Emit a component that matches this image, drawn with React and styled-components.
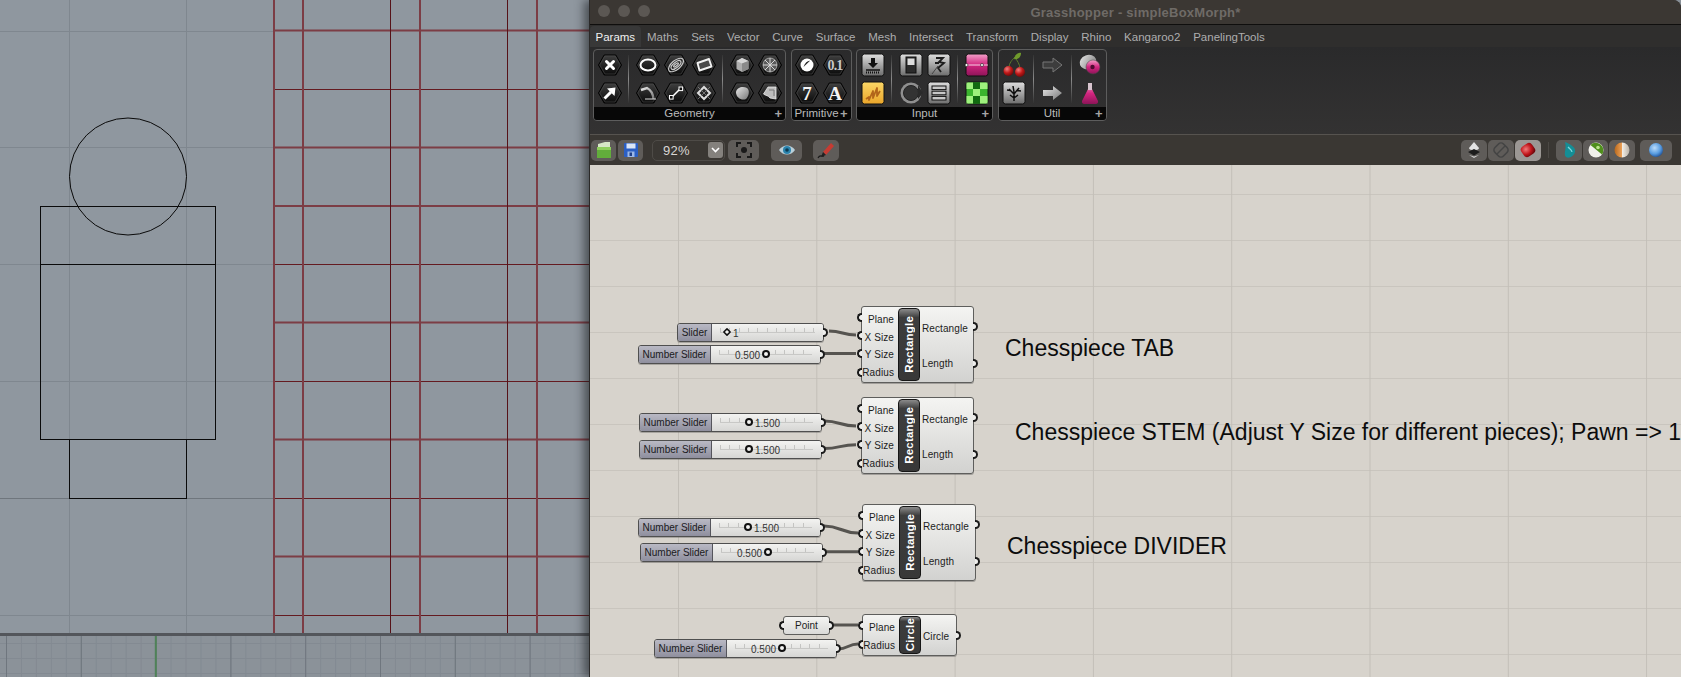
import React from "react";
import styled, { createGlobalStyle } from "styled-components";

const GlobalStyle = createGlobalStyle`
  html, body, #root {
    margin: 0;
    width: 100%;
    height: 100%;
    overflow: hidden;
    background: #8f979f;
  }
  * { box-sizing: border-box; }
`;

const FONT = `"Liberation Sans", Arial, sans-serif`;

/* ---------- rhino side ---------- */

const RED_V = [[274, 1], [303, 1], [390.5, 0], [420, 1], [507.5, 0], [537, 1]];
const RED_H = [
  [30.5, 1], [89.5, 0], [147.5, 1], [206, 1], [264.5, 0], [322.5, 1],
  [381.5, 0], [439.5, 1], [498.5, 0], [556.5, 1], [615.5, 0],
];
const FAINT_H = [31.5, 147.5, 264.5, 381.5, 498.5, 615.5];

const RhinoDrawing = () => (
  <svg width="589" height="634" viewBox="0 0 589 634">
    {[69.5, 186.5].map((x) => (
      <line key={x} x1={x} x2={x} y1="0" y2="634" stroke="#7f878f" strokeWidth="1" />
    ))}
    {FAINT_H.map((y) => (
      <line key={y} x1="0" x2="274" y1={y} y2={y} stroke={y === 498.5 ? "#6f767d" : "#7f878f"} strokeWidth="1" />
    ))}
    {RED_H.map(([y, thick]) => (
      <line key={y} x1="274" x2="589" y1={y} y2={y}
        stroke={thick ? "#7c3d45" : "#641a20"} strokeWidth={thick ? 2 : 1} />
    ))}
    {RED_V.map(([x, thick]) => (
      <line key={x} x1={x} x2={x} y1="0" y2="634"
        stroke={thick ? "#7c3d45" : "#561218"} strokeWidth={thick ? 2 : 1} />
    ))}
    <g fill="none" stroke="#0a0a0a" strokeWidth="1">
      <circle cx="128" cy="176.5" r="58.5" />
      <rect x="40.5" y="206.5" width="175" height="58" />
      <rect x="40.5" y="264.5" width="175" height="175" />
      <rect x="69.5" y="439.5" width="117" height="59" />
    </g>
  </svg>
);

const StripGrid = () => {
  const minor = Array.from({ length: 40 }, (_, i) => 6.5 + i * 14.96);
  const major = Array.from({ length: 8 }, (_, i) => 6.5 + i * 74.8);
  return (
    <svg width="589" height="41" viewBox="0 0 589 41">
      {minor.map((x) => (
        <line key={x} x1={x} x2={x} y1="0" y2="41" stroke="#838a92" strokeWidth="1" />
      ))}
      {[7.5, 22.5, 37.5].map((y) => (
        <line key={y} x1="0" x2="589" y1={y} y2={y} stroke="#838a92" strokeWidth="1" />
      ))}
      {major.map((x) => (
        <line key={x} x1={x} x2={x} y1="0" y2="41" stroke="#6f767e" strokeWidth="1" />
      ))}
      <line x1="155.8" x2="155.8" y1="0" y2="41" stroke="#4f8258" strokeWidth="2" />
    </svg>
  );
};

const Page = styled.div`
  display: flex;
  width: 1681px;
  height: 677px;
  font-family: ${FONT};
`;

const RhinoPane = styled.div`
  display: flex;
  flex-direction: column;
  width: 589px;
  flex: none;
  background: #8f979f;
`;

const Viewport = styled.div`
  height: 633px;
  line-height: 0;
  overflow: hidden;
`;

const ViewDivider = styled.div`
  height: 3px;
  background: #53565b;
`;

const Strip = styled.div`
  flex: 1;
  line-height: 0;
  overflow: hidden;
  background: #8b9299;
`;

/* ---------- grasshopper window ---------- */

const GhWindow = styled.div`
  position: relative;
  z-index: 1;
  flex: 1;
  display: flex;
  flex-direction: column;
  border-left: 1px solid #2a2928;
  border-top-right-radius: 8px;
  box-shadow: -5px 0 10px rgba(20, 22, 26, 0.55);
  overflow: hidden;
  background: #3a3632;
`;

const TitleBar = styled.div`
  position: relative;
  display: flex;
  align-items: center;
  justify-content: center;
  height: 25px;
  flex: none;
  background: #3b3733;
  border-bottom: 1px solid #0f0e0d;
  color: #6f6b67;
  font-size: 13px;
  font-weight: 700;
  letter-spacing: 0.25px;
`;

const Lights = styled.div`
  position: absolute;
  left: 7.5px;
  top: 5px;
  display: flex;
  gap: 8px;
`;

const Light = styled.span`
  width: 12px;
  height: 12px;
  border-radius: 50%;
  background: #5b5753;
`;

const TabBar = styled.div`
  display: flex;
  align-items: flex-end;
  height: 22px;
  flex: none;
  background: #2f2e2d;
`;

const Tab = styled.div`
  display: flex;
  align-items: center;
  height: 21px;
  padding: ${(p) => (p.$active ? "0 5.5px" : "0 6.4px")};
  font-size: 11.5px;
  color: ${(p) => (p.$active ? "#f0f0f0" : "#adadad")};
  background: ${(p) => (p.$active ? "#383838" : "transparent")};
  border-radius: 4px 4px 0 0;
`;

const Ribbon = styled.div`
  display: flex;
  align-items: flex-start;
  gap: 4.5px;
  height: 88px;
  flex: none;
  padding: 2px 0 0 3px;
  background: linear-gradient(#2a2a2b, #333232);
  border-bottom: 1px solid #56534f;
`;

const Group = styled.div`
  display: flex;
  flex-direction: column;
  height: 72px;
  border: 1px solid #5d5d5d;
  border-radius: 4px;
  overflow: hidden;
`;

const GroupBody = styled.div`
  flex: 1;
  display: flex;
  align-items: center;
  gap: 5px;
  padding: 0 1.5px;
`;

const IconCols = styled.div`
  display: grid;
  grid-auto-flow: column;
  grid-template-rows: repeat(2, 28px);
  grid-auto-columns: 28px;
  line-height: 0;
`;

const Sep = styled.div`
  width: 1px;
  height: 48px;
  margin: 0 -0.5px;
  background: linear-gradient(#333, #8a8a8a 50%, #333);
`;

const GroupFoot = styled.div`
  position: relative;
  flex: none;
  height: 13px;
  line-height: 13px;
  text-align: center;
  background: #070707;
  color: #b9b9b9;
  font-size: 11.5px;
  padding-right: ${(p) => (p.$narrow ? "9px" : "0")};
`;

const Plus = styled.span`
  position: absolute;
  right: 3px;
  top: 0;
  font-size: 13px;
  font-weight: 700;
  color: #a5a5a5;
`;

const Toolbar = styled.div`
  display: flex;
  align-items: center;
  height: 30px;
  flex: none;
  padding: 0 9px 0 1px;
  background: #3a3733;
`;

const ToolGroup = styled.div`
  display: flex;
  align-items: center;
  gap: ${(p) => p.$gap || 1}px;
  margin-left: ${(p) => p.$ml || 0}px;
`;

const ToolBtn = styled.div`
  display: flex;
  align-items: center;
  justify-content: center;
  width: ${(p) => p.$w || 25}px;
  height: 21px;
  border-radius: 5px;
  background: ${(p) => (p.$on ? "#9b9794" : "#5f5c59")};
  line-height: 0;
`;

const ZoomField = styled.div`
  display: flex;
  align-items: center;
  justify-content: space-between;
  width: 73px;
  height: 21px;
  margin-left: 9px;
  padding: 0 1.5px 0 10px;
  border: 1px solid #4e4b47;
  border-radius: 5px;
  color: #d8d6d3;
  font-size: 13px;
  letter-spacing: 0.3px;
`;

const ZoomChevron = styled.span`
  display: flex;
  align-items: center;
  justify-content: center;
  width: 15px;
  height: 16px;
  border-radius: 3px;
  background: #84817d;
  line-height: 0;
`;

const ToolDivider = styled.div`
  width: 1px;
  height: 16px;
  margin: 0 7px;
  background: #4b4844;
`;

const Spacer = styled.div`
  flex: 1;
`;

/* ---------- canvas ---------- */

const Canvas = styled.div`
  position: relative;
  flex: 1;
  overflow: hidden;
  background-color: #d7d3cc;
  background-image:
    linear-gradient(to right, #c3bfb8 1px, transparent 1px),
    linear-gradient(to bottom, #c9c5be 1px, transparent 1px);
  background-size: 138.3px 100%, 100% 46px;
  background-position: 88px 0, 0 29px;
`;

const WireLayer = styled.svg`
  position: absolute;
  left: 0;
  top: 0;
  width: 100%;
  height: 100%;
`;

const Note = styled.div`
  position: absolute;
  left: ${(p) => p.$x - 590}px;
  top: ${(p) => p.$y - 165}px;
  font-size: 23px;
  line-height: 26px;
  color: #0c0c0c;
  white-space: nowrap;
`;

const Comp = styled.div`
  position: absolute;
  left: ${(p) => p.$x - 590}px;
  top: ${(p) => p.$y - 165}px;
  width: ${(p) => p.$w}px;
  height: ${(p) => p.$h}px;
  display: flex;
  padding: 1px 0 1px 0;
  background: linear-gradient(#f4f4f2, #d2d2d0);
  border: 1px solid #5e5e5c;
  border-radius: 3px;
  font-size: 10px;
  color: #1c1c1c;
  box-shadow: 0 1px 0 rgba(60, 60, 60, 0.35);
`;

const Ports = styled.div`
  display: flex;
  flex-direction: column;
  justify-content: space-around;
  align-items: ${(p) => (p.$out ? "flex-start" : "flex-end")};
  width: ${(p) => p.$w}px;
  flex: ${(p) => (p.$out ? "1" : "none")};
  padding: ${(p) => (p.$out ? "3px 0 0 2px" : "3px 4px 0 0")};
`;

const Port = styled.div`
  letter-spacing: 0.1px;
`;

const Grip = styled.span`
  position: absolute;
  top: ${(p) => p.$y}px;
  ${(p) => (p.$right ? "right: -5px;" : "left: -5px;")}
  width: 5px;
  height: 9px;
  background: #eeeeec;
  border: 2px solid #1a1a1a;
  ${(p) => (p.$right
    ? "border-left: none; border-radius: 0 5px 5px 0;"
    : "border-right: none; border-radius: 5px 0 0 5px;")}
`;

const Capsule = styled.div`
  flex: none;
  display: flex;
  align-items: center;
  justify-content: center;
  width: 22px;
  background: linear-gradient(#8b8b8b, #3d3d3d 12%, #383838);
  border: 1px solid #161616;
  border-radius: 4px;
  color: #fff;
  font-size: 11.5px;
  font-weight: 700;
  letter-spacing: 0.2px;
  span {
    writing-mode: vertical-rl;
    transform: rotate(180deg);
  }
`;

const PointParam = styled.div`
  position: absolute;
  left: ${(p) => p.$x - 590}px;
  top: ${(p) => p.$y - 165}px;
  width: 47px;
  height: 19px;
  display: flex;
  align-items: center;
  justify-content: center;
  background: linear-gradient(#f4f4f2, #dadad8);
  border: 1px solid #5e5e5c;
  border-radius: 3px;
  font-size: 10px;
  color: #1c1c1c;
`;

const SliderBox = styled.div`
  position: absolute;
  left: ${(p) => p.$x - 590}px;
  top: ${(p) => p.$y - 165}px;
  width: ${(p) => p.$w}px;
  height: 19px;
  display: flex;
  border: 1px solid #4f4f4f;
  border-radius: 3px;
  font-size: 10px;
  color: #1a1a20;
  box-shadow: 0 1px 0 rgba(60, 60, 60, 0.3);
`;

const SliderLabel = styled.div`
  flex: none;
  width: ${(p) => p.$w}px;
  display: flex;
  align-items: center;
  justify-content: center;
  background: linear-gradient(#b9b9c4, #8f8f9e);
  border-right: 1px solid #55555c;
  border-radius: 2px 0 0 2px;
`;

const SliderTrack = styled.div`
  position: relative;
  flex: 1;
  background: linear-gradient(#f3f3f1, #d6d6d4);
  border-radius: 0 2px 2px 0;
`;

const Ticks = styled.div`
  position: absolute;
  left: 8px;
  right: 8px;
  top: 4px;
  height: 5px;
  border-bottom: 1px solid #c8c8c6;
  background: repeating-linear-gradient(to right, #c4c4c2 0 1px, transparent 1px 9.3px);
`;

const Reading = styled.div`
  position: absolute;
  left: ${(p) => p.$x}px;
  top: 3px;
  display: flex;
  align-items: center;
  gap: 2px;
  height: 12px;
  color: #333;
`;

const Knob = styled.span`
  width: 8px;
  height: 8px;
  margin-top: ${(p) => (p.$high ? "-2px" : "0")};
  background: #f4f4f2;
  border: 2px solid #111;
  border-radius: ${(p) => (p.$diamond ? "1px" : "50%")};
  transform: ${(p) => (p.$diamond ? "rotate(45deg) scale(0.75)" : "none")};
`;

/* ---------- icons ---------- */

const Defs = () => (
  <svg width="0" height="0" style={{ position: "absolute" }}>
    <defs>
      <linearGradient id="hexFill" x1="0" y1="0" x2="0" y2="1">
        <stop offset="0" stopColor="#3f3f3f" />
        <stop offset="1" stopColor="#0b0b0b" />
      </linearGradient>
      <linearGradient id="silver" x1="0" y1="0" x2="0" y2="1">
        <stop offset="0" stopColor="#dedede" />
        <stop offset="1" stopColor="#6d6d6d" />
      </linearGradient>
      <linearGradient id="grey" x1="0" y1="0" x2="1" y2="1">
        <stop offset="0" stopColor="#e8e8e8" />
        <stop offset="1" stopColor="#777" />
      </linearGradient>
      <linearGradient id="pink" x1="0" y1="0" x2="0" y2="1">
        <stop offset="0" stopColor="#f2a0c8" />
        <stop offset="0.5" stopColor="#d2257f" />
        <stop offset="1" stopColor="#8d1458" />
      </linearGradient>
      <linearGradient id="amber" x1="0" y1="0" x2="0" y2="1">
        <stop offset="0" stopColor="#fbd766" />
        <stop offset="1" stopColor="#eaa52a" />
      </linearGradient>
      <radialGradient id="cherry" cx="0.35" cy="0.3" r="0.8">
        <stop offset="0" stopColor="#f08080" />
        <stop offset="0.5" stopColor="#c01818" />
        <stop offset="1" stopColor="#5e0808" />
      </radialGradient>
      <radialGradient id="ballBlue" cx="0.4" cy="0.35" r="0.7">
        <stop offset="0" stopColor="#bcdcfa" />
        <stop offset="0.6" stopColor="#5a9de0" />
        <stop offset="1" stopColor="#1d4f96" />
      </radialGradient>
      <radialGradient id="ballRed" cx="0.4" cy="0.35" r="0.7">
        <stop offset="0" stopColor="#f07a7a" />
        <stop offset="0.6" stopColor="#c2161c" />
        <stop offset="1" stopColor="#6e080c" />
      </radialGradient>
      <linearGradient id="orangeWhite" x1="0" y1="0" x2="1" y2="0">
        <stop offset="0" stopColor="#b8681c" />
        <stop offset="0.5" stopColor="#eda35a" />
        <stop offset="0.52" stopColor="#f3eee6" />
        <stop offset="1" stopColor="#b9b1a6" />
      </linearGradient>
    </defs>
  </svg>
);

const Hex = ({ children }) => (
  <svg width="28" height="28" viewBox="0 0 28 28">
    <polygon points="2.5,14 8.2,4 19.8,4 25.5,14 19.8,24 8.2,24" fill="url(#hexFill)" stroke="#000" />
    <polygon points="3.8,14 9,5 19,5 24.2,14 19,23 9,23" fill="none" stroke="#4a4a4a" strokeWidth="0.6" />
    {children}
  </svg>
);

const Tile = ({ fill = "url(#silver)", children }) => (
  <svg width="28" height="28" viewBox="0 0 28 28">
    <rect x="3" y="3" width="22" height="22" rx="2.5" fill={fill} stroke="#111" />
    {children}
  </svg>
);

const Bare = ({ children, w = 28, h = 28 }) => (
  <svg width={w} height={h} viewBox={`0 0 ${w} ${h}`}>{children}</svg>
);

const SERIF = `"Liberation Serif", serif`;

const ribbonIcons = {
  cross: (
    <Hex>
      <path d="M10.5 10.5 L17.5 17.5 M17.5 10.5 L10.5 17.5" stroke="#fff" strokeWidth="3" strokeLinecap="round" />
    </Hex>
  ),
  arrow: (
    <Hex>
      <path d="M8.5 19.5 L15 13" stroke="#fff" strokeWidth="3" />
      <path d="M19.5 8.5 L18.5 17 L11 9.5 Z" fill="#fff" />
    </Hex>
  ),
  ring: (
    <Hex>
      <ellipse cx="14" cy="14" rx="7.5" ry="5.5" fill="none" stroke="#fff" strokeWidth="2" />
    </Hex>
  ),
  curve: (
    <Hex>
      <path d="M7 11 L13 9 C17 11 19 15 19.5 20" fill="none" stroke="url(#grey)" strokeWidth="2.4" />
      <path d="M11 20 L22 20" stroke="#ddd" strokeWidth="1.2" />
    </Hex>
  ),
  swirl: (
    <Hex>
      <g fill="none" stroke="#c9c9c9" strokeWidth="1.2" transform="rotate(-40 14 14)">
        <ellipse cx="14" cy="14" rx="9" ry="4.5" />
        <ellipse cx="14" cy="14" rx="6" ry="2.6" />
        <ellipse cx="14" cy="14" rx="3" ry="1" />
      </g>
    </Hex>
  ),
  panel: (
    <Hex>
      <path d="M7.5 12 L19 8 L21.5 15.5 L9.5 19.5 Z" fill="#4a4a4a" stroke="#f2f2f2" strokeWidth="1.9" strokeLinejoin="round" />
    </Hex>
  ),
  line: (
    <Hex>
      <path d="M10 18 L18 10" stroke="#fff" strokeWidth="1.6" />
      <rect x="7.5" y="16.5" width="3.6" height="3.6" fill="#111" stroke="#fff" />
      <rect x="17" y="8" width="3.6" height="3.6" fill="#111" stroke="#fff" />
    </Hex>
  ),
  diamond: (
    <Hex>
      <path d="M14 8 L20 14 L14 20 L8 14 Z" fill="none" stroke="#ddd" strokeWidth="2" />
      <path d="M8 8 L20 20 M20 8 L8 20" stroke="#888" strokeWidth="0.8" />
    </Hex>
  ),
  cube: (
    <Hex>
      <path d="M14 7 L20.5 10 L20.5 18 L14 21 L8.5 18 L8.5 10 Z" fill="#aeaeae" />
      <path d="M8.5 10 L14 12.5 L20.5 10 L14 7 Z" fill="#d6d6d6" />
      <path d="M14 12.5 L14 21 L20.5 18 L20.5 10 Z" fill="#8a8a8a" />
    </Hex>
  ),
  mesh: (
    <Hex>
      <circle cx="14" cy="14" r="7" fill="#5a5a5a" stroke="#bbb" strokeWidth="0.8" />
      <path d="M7 14 H21 M14 7 V21 M9 9 L19 19 M19 9 L9 19" stroke="#d8d8d8" strokeWidth="1" />
    </Hex>
  ),
  gem: (
    <Hex>
      <path d="M8 13 C9 8 15 7 19 9 C22 11 21 17 18 20 C14 22 8 19 8 13 Z" fill="url(#grey)" />
    </Hex>
  ),
  patch: (
    <Hex>
      <path d="M12 8 L20 8 L20 20 L14 19 C12 16 10 17 7.5 15 Z" fill="#bdbdbd" stroke="#eee" strokeWidth="0.8" />
      <path d="M13 11 L18 11 L18 17" fill="none" stroke="#777" />
    </Hex>
  ),
  boolean: (
    <Hex>
      <circle cx="14" cy="14" r="6.5" fill="#fff" />
      <path d="M10.5 16 L17 9.8 C15 9.5 12 11.5 10.5 16 Z" fill="#222" />
    </Hex>
  ),
  decimal: (
    <Hex>
      <text x="14" y="19" textAnchor="middle" fontFamily={SERIF} fontSize="14" fontWeight="700" fill="#c8c8c8" letterSpacing="-0.8">0.1</text>
    </Hex>
  ),
  seven: (
    <Hex>
      <text x="14" y="21" textAnchor="middle" fontFamily={SERIF} fontSize="19" fontWeight="700" fill="#f4f4f4">7</text>
    </Hex>
  ),
  letter: (
    <Hex>
      <text x="14" y="21" textAnchor="middle" fontFamily={SERIF} fontSize="19" fontWeight="700" fill="#f4f4f4">A</text>
    </Hex>
  ),
  download: (
    <Tile>
      <path d="M12 7 H16 V12 H19 L14 17 L9 12 H12 Z" fill="#111" />
      <path d="M7 19 H21" stroke="#111" strokeWidth="1.4" />
      <path d="M7 21.5 H21" stroke="#111" strokeWidth="2" strokeDasharray="1 1" />
    </Tile>
  ),
  scribble: (
    <Tile fill="url(#amber)">
      <path d="M7 20 L10 18 L10 21 L14 12 L14 19 L18 9 L18 17 L21 12" fill="none" stroke="#b2651a" strokeWidth="1.8" strokeLinejoin="round" />
    </Tile>
  ),
  toggle: (
    <Tile>
      <rect x="9" y="6" width="10" height="16" fill="#2b2b2b" stroke="#111" />
      <rect x="10.5" y="7.5" width="7" height="6.5" fill="#ddd" />
    </Tile>
  ),
  crack: (
    <Tile>
      <path d="M11 7 L18 7 L14 11 L19 12 L13 17 L16 21 M10 12 L14 12" fill="none" stroke="#1d1d1d" strokeWidth="1.8" />
      <path d="M7 23 L13 15" stroke="#444" strokeWidth="1" />
    </Tile>
  ),
  knob: (
    <Bare>
      <circle cx="14" cy="14" r="10.5" fill="#8f8f8f" />
      <circle cx="14" cy="14" r="7.5" fill="#333" stroke="#222" />
      <path d="M21 6 L26 14 L21 20 Z" fill="#2a2a2a" />
    </Bare>
  ),
  rows: (
    <Tile>
      <rect x="7" y="7" width="14" height="3.6" fill="#c8c8c8" stroke="#111" />
      <rect x="7" y="12.2" width="14" height="3.6" fill="#c8c8c8" stroke="#111" />
      <rect x="7" y="17.4" width="14" height="3.6" fill="#c8c8c8" stroke="#111" />
    </Tile>
  ),
  gradient: (
    <Tile fill="url(#pink)">
      <path d="M3 14 H25" stroke="#fff" strokeWidth="0.8" />
      <circle cx="3.5" cy="14" r="1.5" fill="#fff" stroke="#111" strokeWidth="0.6" />
      <circle cx="19" cy="14" r="1.5" fill="#fff" stroke="#111" strokeWidth="0.6" />
    </Tile>
  ),
  checker: (
    <Tile fill="#3bb52e">
      <path d="M3.5 3.5 H10 V10 H3.5 Z M17 3.5 H24.5 V10 H17 Z M10 10 H17 V17 H10 Z M3.5 17 H10 V24.5 H3.5 Z M17 17 H24.5 V24.5 H17 Z" fill="#9ef07d" />
      <path d="M10 17 H17 V24.5 H10 Z M10 3.5 H17 V10 H10 Z" fill="#116a10" />
    </Tile>
  ),
  cherries: (
    <Bare>
      <path d="M15 6 C12 9 9 12 9 17 M15 6 C17 10 20 13 20 18" fill="none" stroke="#5d7a2c" strokeWidth="1" />
      <path d="M14 8 C15 3 19 1 21 2 C21 6 18 9 14 8 Z" fill="#6f9a2c" />
      <circle cx="8.5" cy="20" r="5" fill="url(#cherry)" />
      <circle cx="20" cy="21" r="5" fill="url(#cherry)" />
    </Bare>
  ),
  tree: (
    <Tile fill="url(#silver)">
      <path d="M14 22 L14 13 M14 15 L9 10 M14 15 L19 9 M14 13 L13 7 M10.5 11.5 L7 11 M17 11.5 L21 12 M14 19 L10 16 M14 19 L18 16" stroke="#0d0d0d" strokeWidth="1.5" fill="none" />
    </Tile>
  ),
  arrowDark: (
    <Bare>
      <path d="M5 11 H15 V7 L24 14 L15 21 V17 H5 Z" fill="#3d3d3d" stroke="#777" strokeWidth="1" />
    </Bare>
  ),
  arrowLight: (
    <Bare>
      <path d="M5 11 H15 V7 L24 14 L15 21 V17 H5 Z" fill="url(#grey)" />
    </Bare>
  ),
  graph: (
    <Bare>
      <ellipse cx="12" cy="11" rx="8.5" ry="7" fill="url(#grey)" transform="rotate(-20 12 11)" />
      <circle cx="17" cy="16" r="7" fill="url(#pink)" stroke="#444" strokeWidth="0.5" />
      <circle cx="16.5" cy="16" r="2.2" fill="#4d0b30" />
    </Bare>
  ),
  flask: (
    <Bare>
      <path d="M12 4 H16 V10 L22 22 C22.5 24 21 25 20 25 H8 C7 25 5.5 24 6 22 L12 10 Z" fill="url(#pink)" />
      <path d="M12 4 H16 V11 H12 Z" fill="#d8c4ce" />
    </Bare>
  ),
};

const RibbonGroup = ({ title, narrow, sections }) => (
  <Group>
    <GroupBody>
      {sections.map((icons, i) => (
        <React.Fragment key={i}>
          {i > 0 && <Sep />}
          <IconCols>
            {icons.map((name, n) => (
              <div key={n}>{ribbonIcons[name]}</div>
            ))}
          </IconCols>
        </React.Fragment>
      ))}
    </GroupBody>
    <GroupFoot $narrow={narrow}>
      {title}
      <Plus>+</Plus>
    </GroupFoot>
  </Group>
);

const FolderIcon = () => (
  <Bare w={18} h={18}>
    <path d="M3 3 L10 1 L15 1 L15 6 L3 6 Z" fill="#d7e7c6" />
    <path d="M2 6 H16 V17 H2 Z" fill="#62ad3b" />
    <path d="M2 6 H16 V9 H2 Z" fill="#8fcf5d" />
  </Bare>
);

const SaveIcon = () => (
  <Bare w={18} h={18}>
    <rect x="2" y="2" width="14" height="14" rx="1" fill="#2b5fc4" />
    <rect x="4.5" y="2.5" width="9" height="5" fill="#dbe6f7" />
    <rect x="5.5" y="10.5" width="7" height="5.5" fill="#9cb8e6" />
    <rect x="7.5" y="11.5" width="2.5" height="3.5" fill="#1f3f88" />
  </Bare>
);

const FocusIcon = () => (
  <Bare w={18} h={18}>
    <g fill="none" stroke="#1a1a1a" strokeWidth="2">
      <path d="M2 6 V2 H6 M12 2 H16 V6 M16 12 V16 H12 M6 16 H2 V12" />
    </g>
    <circle cx="9" cy="9" r="3" fill="#1a1a1a" />
  </Bare>
);

const EyeIcon = () => (
  <Bare w={18} h={14}>
    <path d="M1 7 C5 1 13 1 17 7 C13 13 5 13 1 7 Z" fill="#b9cfd9" />
    <circle cx="9" cy="7" r="4" fill="#2a83ad" />
    <circle cx="9" cy="7" r="1.8" fill="#0c3a52" />
  </Bare>
);

const PenIcon = () => (
  <Bare w={18} h={18}>
    <path d="M6 11 L14 2 L17 5 L9 14 Z" fill="#c63b32" />
    <path d="M6 11 L9 14 L4 16 Z" fill="#222" />
    <path d="M1 17 C3 13 5 16 7 15" fill="none" stroke="#1a1a1a" strokeWidth="1.2" />
  </Bare>
);

const ConeIcon = () => (
  <Bare w={18} h={18}>
    <path d="M9 1 L14 7 C14 10 4 10 4 7 Z" fill="#e4e4e4" />
    <path d="M3 11 L9 8 L15 11 L9 14.5 Z" fill="#1d1d1d" />
    <path d="M4 14 L9 17 L14 14 L9 15.5 Z" fill="#cfcfcf" />
  </Bare>
);

const BlockedIcon = () => (
  <Bare w={18} h={18}>
    <rect x="3" y="3" width="12" height="12" rx="3.5" transform="rotate(-45 9 9)" fill="none" stroke="#444" strokeWidth="1.6" />
    <path d="M5 13 L13 5" stroke="#444" strokeWidth="1.4" />
  </Bare>
);

const GemIcon = () => (
  <Bare w={18} h={18}>
    <rect x="2.5" y="3" width="13" height="12" rx="4" transform="rotate(-35 9 9)" fill="url(#ballRed)" />
  </Bare>
);

const TealIcon = () => (
  <Bare w={18} h={18}>
    <path d="M5 1 C10 3 16 6 15 11 C14 15 9 18 6 16 C3 13 7 8 5 1 Z" fill="#148e96" />
    <path d="M8 6 C10 8 12 9 12 11" stroke="#7cd8dc" strokeWidth="1.2" fill="none" />
  </Bare>
);

const HalfGreenIcon = () => (
  <Bare w={18} h={18}>
    <circle cx="9" cy="9" r="7.5" fill="#f0f0ea" />
    <path d="M3.5 4 A7.5 7.5 0 0 1 15 13.5 Z" fill="#4f8f1c" />
    <circle cx="11" cy="6.5" r="1.8" fill="#b9e58a" />
  </Bare>
);

const HalfOrangeIcon = () => (
  <Bare w={18} h={18}>
    <circle cx="9" cy="9" r="7.5" fill="url(#orangeWhite)" />
  </Bare>
);

const BlueBallIcon = () => (
  <Bare w={18} h={18}>
    <circle cx="9" cy="9" r="7" fill="url(#ballBlue)" />
  </Bare>
);

/* ---------- canvas parts ---------- */

const Slider = ({ x, y, w, split, label = "Number Slider", value, at, knobFirst, diamond }) => (
  <SliderBox $x={x} $y={y} $w={w}>
    <SliderLabel $w={split}>{label}</SliderLabel>
    <SliderTrack>
      <Ticks />
      <Reading $x={at}>
        {knobFirst && <Knob $diamond={diamond} $high />}
        <span>{value}</span>
        {!knobFirst && <Knob $high />}
      </Reading>
    </SliderTrack>
    <Grip $right $y={4} />
  </SliderBox>
);

const Component = ({ x, y, w, h, name, inputs, outputs, inW = 36, gripsIn, gripsOut }) => (
  <Comp $x={x} $y={y} $w={w} $h={h}>
    <Ports $w={inW}>
      {inputs.map((p) => <Port key={p}>{p}</Port>)}
    </Ports>
    <Capsule><span>{name}</span></Capsule>
    <Ports $out>
      {outputs.map((p) => <Port key={p}>{p}</Port>)}
    </Ports>
    {gripsIn.map((g) => <Grip key={g} $y={g} />)}
    {gripsOut.map((g) => <Grip key={g} $right $y={g} />)}
  </Comp>
);

const WIRES = [
  [829, 331, 856, 335],
  [822, 353.5, 856, 353.5],
  [824, 421, 856, 426],
  [824, 448.5, 856, 444.7],
  [824, 526, 858, 533],
  [825, 551.7, 858, 551.7],
  [831, 625, 858, 625],
  [838, 649, 858, 644],
];

const RECT_INPUTS = ["Plane", "X Size", "Y Size", "Radius"];
const RECT_OUTPUTS = ["Rectangle", "Length"];

const TABS = ["Maths", "Sets", "Vector", "Curve", "Surface", "Mesh", "Intersect", "Transform", "Display", "Rhino", "Kangaroo2", "PanelingTools"];

const App = () => (
  <Page>
    <GlobalStyle />
    <Defs />
    <RhinoPane>
      <Viewport><RhinoDrawing /></Viewport>
      <ViewDivider />
      <Strip><StripGrid /></Strip>
    </RhinoPane>

    <GhWindow>
      <TitleBar>
        <Lights>
          <Light /><Light /><Light />
        </Lights>
        Grasshopper - simpleBoxMorph*
      </TitleBar>

      <TabBar>
        <Tab $active>Params</Tab>
        {TABS.map((t) => <Tab key={t}>{t}</Tab>)}
      </TabBar>

      <Ribbon>
        <RibbonGroup
          title="Geometry"
          sections={[
            ["cross", "arrow"],
            ["ring", "curve", "swirl", "line", "panel", "diamond"],
            ["cube", "gem", "mesh", "patch"],
          ]}
        />
        <RibbonGroup title="Primitive" narrow sections={[["boolean", "seven", "decimal", "letter"]]} />
        <RibbonGroup
          title="Input"
          sections={[
            ["download", "scribble"],
            ["toggle", "knob", "crack", "rows"],
            ["gradient", "checker"],
          ]}
        />
        <RibbonGroup
          title="Util"
          sections={[
            ["cherries", "tree"],
            ["arrowDark", "arrowLight"],
            ["graph", "flask"],
          ]}
        />
      </Ribbon>

      <Toolbar>
        <ToolGroup $gap={2}>
          <ToolBtn><FolderIcon /></ToolBtn>
          <ToolBtn><SaveIcon /></ToolBtn>
        </ToolGroup>
        <ZoomField>
          92%
          <ZoomChevron>
            <svg width="9" height="6" viewBox="0 0 9 6">
              <path d="M1 1 L4.5 4.5 L8 1" fill="none" stroke="#fff" strokeWidth="1.6" />
            </svg>
          </ZoomChevron>
        </ZoomField>
        <ToolGroup $ml={3}>
          <ToolBtn $w={31}><FocusIcon /></ToolBtn>
        </ToolGroup>
        <ToolGroup $ml={12}>
          <ToolBtn $w={31}><EyeIcon /></ToolBtn>
        </ToolGroup>
        <ToolGroup $ml={11}>
          <ToolBtn $w={26}><PenIcon /></ToolBtn>
        </ToolGroup>
        <Spacer />
        <ToolGroup>
          <ToolBtn $w={26}><ConeIcon /></ToolBtn>
          <ToolBtn $w={26}><BlockedIcon /></ToolBtn>
          <ToolBtn $w={26} $on><GemIcon /></ToolBtn>
        </ToolGroup>
        <ToolDivider />
        <ToolGroup>
          <ToolBtn $w={26}><TealIcon /></ToolBtn>
          <ToolBtn $w={25}><HalfGreenIcon /></ToolBtn>
          <ToolBtn $w={26}><HalfOrangeIcon /></ToolBtn>
        </ToolGroup>
        <ToolGroup $ml={5}>
          <ToolBtn $w={32}><BlueBallIcon /></ToolBtn>
        </ToolGroup>
      </Toolbar>

      <Canvas>
        <WireLayer>
          {WIRES.map(([x1, y1, x2, y2]) => {
            const ax = x1 - 590, ay = y1 - 165, bx = x2 - 590, by = y2 - 165;
            const mid = (ax + bx) / 2;
            return (
              <path
                key={`${x1}-${y1}`}
                d={`M${ax} ${ay} C${mid} ${ay} ${mid} ${by} ${bx} ${by}`}
                fill="none"
                stroke="#565450"
                strokeWidth="3"
              />
            );
          })}
        </WireLayer>

        <Slider x={677} y={323} w={147} split={34} label="Slider" value="1" at={11} knobFirst diamond />
        <Slider x={638} y={345} w={183} split={72} value="0.500" at={24} />
        <Slider x={639} y={413} w={183} split={72} value="1.500" at={33} knobFirst />
        <Slider x={639} y={440} w={183} split={72} value="1.500" at={33} knobFirst />
        <Slider x={638} y={518} w={183} split={72} value="1.500" at={33} knobFirst />
        <Slider x={640} y={543} w={183} split={72} value="0.500" at={24} />
        <Slider x={654} y={639} w={183} split={72} value="0.500" at={24} />

        <Component x={861} y={306} w={113} h={77} name="Rectangle" inputs={RECT_INPUTS} outputs={RECT_OUTPUTS} gripsIn={[6, 24, 42, 61]} gripsOut={[15, 52]} />
        <Component x={861} y={397} w={113} h={77} name="Rectangle" inputs={RECT_INPUTS} outputs={RECT_OUTPUTS} gripsIn={[6, 24, 42, 61]} gripsOut={[15, 52]} />
        <Component x={862} y={504} w={114} h={77} name="Rectangle" inputs={RECT_INPUTS} outputs={RECT_OUTPUTS} gripsIn={[6, 24, 42, 61]} gripsOut={[15, 52]} />
        <Component x={862} y={614} w={95} h={42} name="Circle" inputs={["Plane", "Radius"]} outputs={["Circle"]} gripsIn={[6, 25]} gripsOut={[16]} />

        <PointParam $x={783} $y={616}>
          Point
          <Grip $y={4} />
          <Grip $right $y={4} />
        </PointParam>

        <Note $x={1005} $y={335}>Chesspiece TAB</Note>
        <Note $x={1015} $y={419}>Chesspiece STEM (Adjust Y Size for different pieces); Pawn =&gt; 1</Note>
        <Note $x={1007} $y={533}>Chesspiece DIVIDER</Note>
      </Canvas>
    </GhWindow>
  </Page>
);

export default App;
